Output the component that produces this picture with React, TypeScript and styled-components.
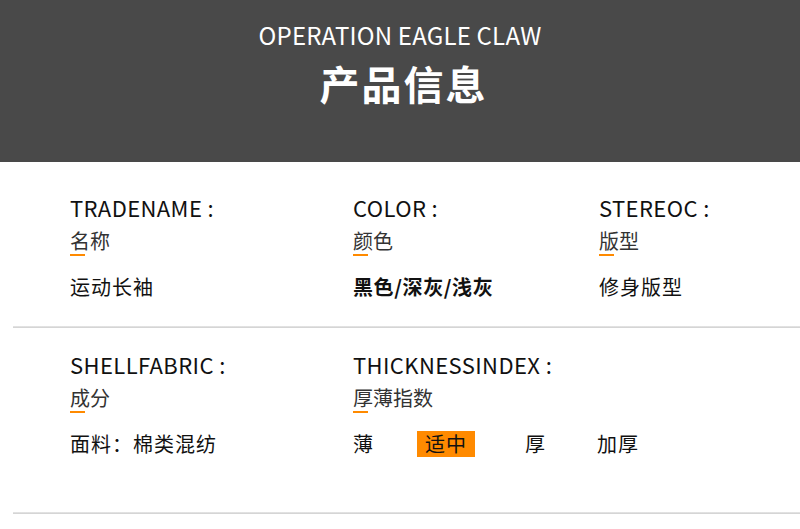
import React from "react";
import styled, { createGlobalStyle } from "styled-components";

const Global = createGlobalStyle`
  html, body { margin: 0; padding: 0; background: #fff; }
  body { width: 800px; height: 529px; overflow: hidden; font-family: "Noto Sans CJK SC", "Noto Sans", sans-serif; }
`;

const Page = styled.div`
  width: 800px;
  height: 529px;
  background: #fff;
  display: flex;
  flex-direction: column;
`;

const Header = styled.header`
  height: 162px;
  box-sizing: border-box;
  background: #494949;
  padding-top: 23px;
  display: flex;
  flex-direction: column;
  align-items: center;
  color: #fff;
`;

const EnTitle = styled.div`
  font-size: 24px;
  line-height: 23px;
  font-weight: 400;
  letter-spacing: 0.2px;
`;

const CnTitle = styled.h1`
  margin: 17px 0 0 7px;
  font-size: 40px;
  line-height: 40px;
  font-weight: 700;
  letter-spacing: 2px;
`;

const Section = styled.section<{ $top: number; $bottom: number }>`
  display: grid;
  grid-template-columns: 283px 246px auto;
  padding: ${(p) => p.$top}px 0 ${(p) => p.$bottom}px 70px;
`;

const Field = styled.div<{ $span?: boolean }>`
  display: flex;
  flex-direction: column;
  align-items: flex-start;
  grid-column: ${(p) => (p.$span ? "2 / 4" : "auto")};
`;

const Label = styled.div`
  font-size: 22px;
  line-height: 20px;
  color: #111;
  letter-spacing: 0.4px;
`;

const Sub = styled.div`
  margin-top: 14px;
  font-size: 20px;
  line-height: 20px;
  color: #333;
`;

const Mark = styled.div`
  margin-top: 3px;
  width: 15px;
  height: 2px;
  background: #ff8a00;
`;

const Value = styled.div<{ $bold?: boolean }>`
  margin-top: 21px;
  font-size: 20px;
  line-height: 20px;
  color: #111;
  font-weight: ${(p) => (p.$bold ? 700 : 400)};
  letter-spacing: ${(p) => (p.$bold ? "0.6px" : "1px")};
`;

const Scale = styled.div`
  margin-top: 18px;
  display: grid;
  grid-template-columns: 64px 108px 72px auto;
  align-items: center;
`;

const Level = styled.span<{ $active?: boolean }>`
  justify-self: start;
  font-size: 20px;
  line-height: 20px;
  color: #111;
  padding: 3px ${(p) => (p.$active ? "8px" : "0")};
  background: ${(p) => (p.$active ? "#ff8a00" : "transparent")};
  letter-spacing: 1px;
`;

const Divider = styled.div`
  margin-left: 13px;
  height: 2px;
  background: linear-gradient(#e8e8e8, #cfcfcf);
`;

const rows1 = [
  { label: "TRADENAME :", sub: "名称", value: "运动长袖" },
  { label: "COLOR :", sub: "颜色", value: "黑色/深灰/浅灰", bold: true },
  { label: "STEREOC :", sub: "版型", value: "修身版型" },
];

const levels = ["薄", "适中", "厚", "加厚"];

export default function App() {
  return (
    <Page>
      <Global />
      <Header>
        <EnTitle>OPERATION EAGLE CLAW</EnTitle>
        <CnTitle>产品信息</CnTitle>
      </Header>
      <Section $top={35} $bottom={29}>
        {rows1.map((r) => (
          <Field key={r.label}>
            <Label>{r.label}</Label>
            <Sub>{r.sub}</Sub>
            <Mark />
            <Value $bold={r.bold}>{r.value}</Value>
          </Field>
        ))}
      </Section>
      <Divider />
      <Section $top={26} $bottom={55}>
        <Field>
          <Label>SHELLFABRIC :</Label>
          <Sub>成分</Sub>
          <Mark />
          <Value>面料：棉类混纺</Value>
        </Field>
        <Field $span>
          <Label>THICKNESSINDEX :</Label>
          <Sub>厚薄指数</Sub>
          <Mark />
          <Scale>
            {levels.map((l) => (
              <Level key={l} $active={l === "适中"}>
                {l}
              </Level>
            ))}
          </Scale>
        </Field>
      </Section>
      <Divider />
    </Page>
  );
}
